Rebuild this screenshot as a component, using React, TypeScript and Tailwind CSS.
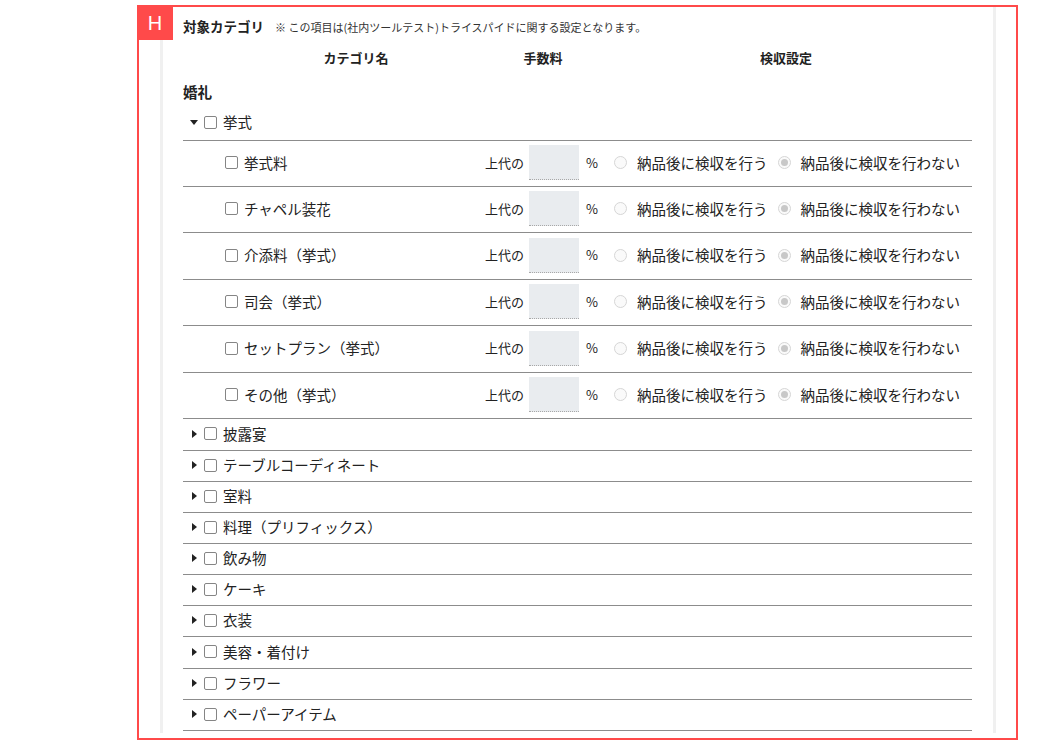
import React from 'react';

const jp = { fontFamily: '"Noto Sans CJK JP", "Noto Sans", sans-serif' };

const children = [
  { name: '挙式料', h: 'h-[46px]' },
  { name: 'チャペル装花', h: 'h-[46px]' },
  { name: '介添料（挙式）', h: 'h-[47px]' },
  { name: '司会（挙式）', h: 'h-[46px]' },
  { name: 'セットプラン（挙式）', h: 'h-[47px]' },
  { name: 'その他（挙式）', h: 'h-[46px]' },
];

const groups = [
  { name: '披露宴', h: 'h-[32px]' },
  { name: 'テーブルコーディネート', h: 'h-[31px]' },
  { name: '室料', h: 'h-[31px]' },
  { name: '料理（プリフィックス）', h: 'h-[31px]' },
  { name: '飲み物', h: 'h-[31px]' },
  { name: 'ケーキ', h: 'h-[31px]' },
  { name: '衣装', h: 'h-[31px]' },
  { name: '美容・着付け', h: 'h-[32px]' },
  { name: 'フラワー', h: 'h-[31px]' },
  { name: 'ペーパーアイテム', h: 'h-[31px]' },
];

function Caret({ open }: { open?: boolean }) {
  return open ? (
    <svg width="8" height="5" viewBox="0 0 8 5" className="shrink-0">
      <path d="M0 0 L8 0 L4 5 Z" fill="#222" />
    </svg>
  ) : (
    <svg width="5" height="8" viewBox="0 0 5 8" className="shrink-0">
      <path d="M0 0 L5 4 L0 8 Z" fill="#222" />
    </svg>
  );
}

function Box() {
  return <span className="inline-block w-[13px] h-[13px] shrink-0 rounded-[2px] border border-[#858585] bg-white" />;
}

function Radio({ checked }: { checked?: boolean }) {
  return (
    <span className="inline-flex w-[13px] h-[13px] shrink-0 items-center justify-center rounded-full border border-[#d6d6d6] bg-[#fafafa]">
      {checked && <span className="w-[7px] h-[7px] rounded-full bg-[#c8c8c8]" />}
    </span>
  );
}

function ChildRow({ name, h }: { name: string; h: string }) {
  return (
    <div className={`${h} pb-[2px] flex items-center border-b border-[#8c8c8c] text-[#222]`}>
      <div className="w-[42px]" />
      <Box />
      <span className="ml-[6px] text-[14.5px] flex-1">{name}</span>
      <span className="text-[13px]">上代の</span>
      <div className="ml-[5px] w-[50px] h-[35px] bg-[#e9ecef] border-b border-dotted border-[#a8a8a8]" />
      <span className="ml-[7px] text-[13px] w-[28px]">%</span>
      <Radio />
      <span className="ml-[10px] text-[14.5px] whitespace-nowrap">納品後に検収を行う</span>
      <span className="ml-[10px] flex"><Radio checked /></span>
      <span className="ml-[10px] text-[14.5px] whitespace-nowrap">納品後に検収を行わない</span>
      <div className="w-[12px]" />
    </div>
  );
}

function GroupRow({ name, h }: { name: string; h: string }) {
  return (
    <div className={`${h} pb-[2px] flex items-center border-b border-[#8c8c8c] text-[#222]`}>
      <div className="w-[9px]" />
      <Caret />
      <span className="ml-[7px] flex"><Box /></span>
      <span className="ml-[6px] text-[14.5px]">{name}</span>
    </div>
  );
}

export default function App() {
  return (
    <div className="w-[1042px] h-[749px] bg-white overflow-hidden" style={jp}>
      <div className="relative ml-[137px] mt-[5px] w-[881px] h-[735px] border-2 border-[#ff4a4a]">
        <div className="absolute -left-[2px] -top-[2px] w-[36px] h-[35px] bg-[#ff4a4a] flex items-center justify-center text-white text-[20px]" style={{ fontFamily: '"Liberation Sans", sans-serif' }}>
          H
        </div>
        <div className="ml-[21px] w-[836px] h-[726px] overflow-hidden border-x-[3px] border-[#f0f0f0] px-[20px]">
          <div className="mt-[9px] h-[20px] flex items-baseline">
            <span className="text-[13.5px] font-bold text-[#222]">対象カテゴリ</span>
            <span className="ml-[11px] text-[11px] text-[#333]">※ この項目は(社内ツールテスト)トライスパイドに関する設定となります。</span>
          </div>
          <div className="mt-[12px] h-[20px] flex items-center text-[13px] font-bold text-[#222]">
            <span className="ml-[23px] w-[300px] text-center">カテゴリ名</span>
            <span className="w-[74px] text-center">手数料</span>
            <span className="ml-[156px] w-[100px] text-center">検収設定</span>
          </div>
          <div className="mt-[14px] h-[20px] flex items-center text-[14.5px] font-bold text-[#222]">婚礼</div>
          <div className="mt-[4px] w-[789px]">
            <div className="h-[35px] pb-[2px] flex items-center border-b border-[#8c8c8c] text-[#222]">
              <div className="w-[7px]" />
              <Caret open />
              <span className="ml-[6px] flex"><Box /></span>
              <span className="ml-[6px] text-[14.5px]">挙式</span>
            </div>
            {children.map((c, i) => (
              <ChildRow key={i} name={c.name} h={c.h} />
            ))}
            {groups.map((g, i) => (
              <GroupRow key={i} name={g.name} h={g.h} />
            ))}
          </div>
        </div>
      </div>
    </div>
  );
}
